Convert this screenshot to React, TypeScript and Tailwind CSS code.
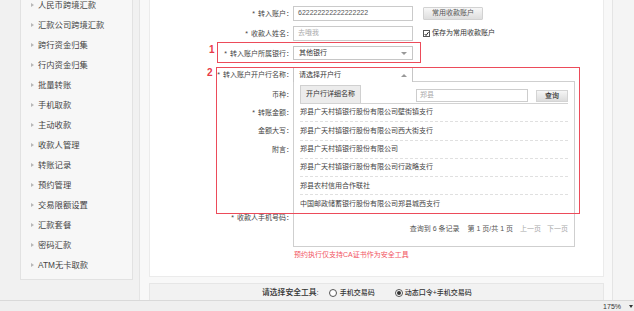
import React from 'react';

const sideItems = [
  '人民币跨境汇款',
  '汇款公司跨境汇款',
  '跨行资金归集',
  '行内资金归集',
  '批量转账',
  '手机取款',
  '主动收款',
  '收款人管理',
  '转账记录',
  '预约管理',
  '交易限额设置',
  '汇款套餐',
  '密码汇款',
  'ATM无卡取款',
];

const banks = [
  '郑县广天村镇银行股份有限公司壁街镇支行',
  '郑县广天村镇银行股份有限公司西大街支行',
  '郑县广天村镇银行股份有限公司',
  '郑县广天村镇银行股份有限公司行政略支行',
  '郑县农村信用合作联社',
  '中国邮政储蓄银行股份有限公司郑县城西支行',
];

const Label = ({ children, req }: { children?: React.ReactNode; req?: boolean }) => (
  <div className="w-[143px] shrink-0 text-right text-[7px] text-[#444] leading-none whitespace-nowrap">
    {req && <span className="mr-[3px]">*</span>}
    {children}
    {children ? '：' : ''}
  </div>
);

const ArrowDown = () => (
  <span className="w-0 h-0 border-x-[3px] border-x-transparent border-t-[3px] border-t-[#999]" />
);

const ArrowUp = () => (
  <span className="w-0 h-0 border-x-[3px] border-x-transparent border-b-[3px] border-b-[#999]" />
);

export default function App() {
  return (
    <div className="w-[634px] h-[311px] overflow-hidden flex flex-col bg-[#f1f1f1] font-['Liberation_Sans','Noto_Sans_CJK_SC',sans-serif]">
      <div className="flex h-[300px]">
        <div className="w-[20px] shrink-0" />

        {/* side menu */}
        <aside className="w-[113px] h-[280px] shrink-0 overflow-hidden bg-[#f7f7f7] border-x border-b border-[#e2e2e2]">
          <ul className="-mt-[5px]">
            {sideItems.map((item) => (
              <li key={item} className="flex items-center h-[20px] pl-[10px] gap-[4px] text-[8.3px] text-[#444]">
                <span className="w-0 h-0 border-y-[2.5px] border-y-transparent border-l-[3px] border-l-[#b8b8b8]" />
                <span>{item}</span>
              </li>
            ))}
          </ul>
        </aside>

        <div className="w-[6px] shrink-0" />

        {/* main column */}
        <main className="w-[474px] shrink-0 flex flex-col pl-[9px] pr-[8px] bg-[#f8f8f8] border-x border-[#e4e4e4]">
          <div className="relative h-[277px] bg-white border-x border-b border-[#ebebeb]">
            <div className="flex flex-col pt-[6px]">
              {/* row 1 */}
              <div className="flex items-center h-[15px]">
                <Label req>转入账户</Label>
                <div className="w-[120px] h-[15px] flex items-center pl-[4px] border border-[#cacaca] text-[7px] text-[#555]">
                  622222222222222222
                </div>
                <div className="ml-[10px] w-[60px] h-[13px] flex items-center justify-center border border-[#d2d2d2] rounded-[1px] bg-gradient-to-b from-[#f7f7f7] to-[#dedede] text-[7px] text-[#555]">
                  常用收款账户
                </div>
              </div>

              {/* row 2 */}
              <div className="flex items-center h-[15px] mt-[5px]">
                <Label req>收款人姓名</Label>
                <div className="w-[120px] h-[15px] flex items-center pl-[4px] border border-[#cacaca] text-[7px] text-[#aaa]">
                  去哦我
                </div>
                <div className="ml-[10px] flex items-center gap-[2px]">
                  <span className="w-[7px] h-[7px] border border-[#555] flex items-center justify-center bg-white">
                    <svg width="6" height="6" viewBox="0 0 6 6">
                      <path d="M0.8 3 L2.4 4.8 L5.4 0.8" fill="none" stroke="#222" strokeWidth="1.2" />
                    </svg>
                  </span>
                  <span className="text-[7px] text-[#333]">保存为常用收款账户</span>
                </div>
              </div>

              {/* row 3 */}
              <div className="flex items-center h-[14px] mt-[5px]">
                <Label req>转入账户所属银行</Label>
                <div className="w-[120px] h-[14px] flex items-center justify-between pl-[5px] pr-[5px] border border-[#c6c6c6] text-[7px] text-[#333]">
                  <span>其他银行</span>
                  <ArrowDown />
                </div>
              </div>

              {/* row 4 with open dropdown */}
              <div className="flex items-center h-[14px] mt-[7px]">
                <Label req>转入账户开户行名称</Label>
                <div className="relative w-[120px] h-[14px]">
                  <div className="absolute left-0 top-0 z-20 w-[120px] h-[15px] flex items-center justify-between pl-[5px] pr-[5px] bg-white border-x border-t border-[#c6c6c6] text-[7px] text-[#333]">
                    <span>请选择开户行</span>
                    <ArrowUp />
                  </div>
                  <div className="absolute left-0 top-[14px] z-10 w-[282px] h-[166px] flex flex-col bg-white border border-[#cfcfcf] pl-[6px] pr-[6px]">
                    <div className="flex items-end h-[22px] border-b border-[#d3d3d3]">
                      <div className="w-[61px] h-[18px] flex items-center justify-center bg-[#ececec] border-x border-t border-[#d0d0d0] text-[7px] text-[#333]">
                        开户行详细名称
                      </div>
                      <div className="ml-auto mb-[1px] w-[112px] h-[13px] flex items-center pl-[3px] border border-[#cdcdcd] text-[7px] text-[#aaa]">
                        郑县
                      </div>
                      <div className="ml-[8px] mb-[1px] w-[32px] h-[12px] flex items-center justify-center border border-[#d4d4d4] bg-gradient-to-b from-[#f6f6f6] to-[#dcdcdc] text-[7px] text-[#333] font-medium">
                        查询
                      </div>
                    </div>
                    <ul className="flex flex-col">
                      {banks.map((b, i) => (
                        <li
                          key={b}
                          className={
                            'h-[18.3px] flex items-center text-[7px] text-[#444] ' +
                            (i < banks.length - 1 ? 'border-b border-dashed border-[#e0e0e0]' : '')
                          }
                        >
                          {b}
                        </li>
                      ))}
                    </ul>
                    <div className="mt-[9px] flex justify-end items-center h-[12px] text-[7px] text-[#555] whitespace-nowrap">
                      <span>查询到 6 条记录</span>
                      <span className="ml-[8px]">第 1 页/共 1 页</span>
                      <span className="ml-[7px] text-[#aaa]">上一页</span>
                      <span className="ml-[6px] text-[#aaa]">下一页</span>
                    </div>
                  </div>
                </div>
              </div>

              {/* rows behind dropdown */}
              <div className="flex items-center h-[18px] mt-[4px]">
                <Label>币种</Label>
              </div>
              <div className="flex items-center h-[18.5px]">
                <Label req>转账金额</Label>
              </div>
              <div className="flex items-center h-[18.5px]">
                <Label>金额大写</Label>
              </div>
              <div className="flex items-center h-[18.5px]">
                <Label>附言</Label>
              </div>
              <div className="flex items-center h-[18px] mt-[50px]">
                <Label req>收款人手机号码</Label>
              </div>
              <div className="flex items-center h-[12px] mt-[23px]">
                <Label />
                <span className="text-[7px] text-[#f2555f] pl-[1px]">预约执行仅支持CA证书作为安全工具</span>
              </div>
            </div>

            {/* annotations */}
            <div className="absolute z-30 left-[67px] top-[42px] w-[204px] h-[21px] border-[1.5px] border-[#ec4b5a]" />
            <div className="absolute z-30 left-[59px] top-[45px] text-[10px] font-bold leading-none text-[#e93a48]">1</div>
            <div className="absolute z-30 left-[66px] top-[67px] w-[364px] h-[147px] border-[1.5px] border-[#ec4b5a]" />
            <div className="absolute z-30 left-[57px] top-[68px] text-[10px] font-bold leading-none text-[#e93a48]">2</div>
          </div>

          {/* security tool bar */}
          <div className="mt-[6px] h-[17px] flex items-end pb-[1px] bg-[#f2f2f2] border-x border-t border-[#e6e6e6]">
            <div className="flex items-center h-[12px] pl-[112px] whitespace-nowrap">
              <span className="text-[7.8px] font-medium text-[#333]">请选择安全工具:</span>
              <span className="ml-[10px] w-[8px] h-[8px] rounded-full border border-[#555] bg-white" />
              <span className="ml-[3px] text-[7px] font-medium text-[#333]">手机交易码</span>
              <span className="ml-[20px] w-[8px] h-[8px] rounded-full border border-[#555] bg-white flex items-center justify-center">
                <span className="w-[4px] h-[4px] rounded-full bg-[#333]" />
              </span>
              <span className="ml-[2px] text-[7px] font-medium text-[#333]">动态口令+手机交易码</span>
            </div>
          </div>
        </main>

        <div className="flex-1 bg-[#f4f4f4]" />
      </div>

      {/* status bar */}
      <div className="h-[11px] flex items-center justify-end bg-[#efefef] border-t border-[#d9d9d9] pr-[1px]">
        <span className="text-[7px] text-[#333] leading-none">175%</span>
        <span className="ml-[8px] w-0 h-0 border-x-[2px] border-x-transparent border-t-[3px] border-t-[#333]" />
      </div>
    </div>
  );
}
